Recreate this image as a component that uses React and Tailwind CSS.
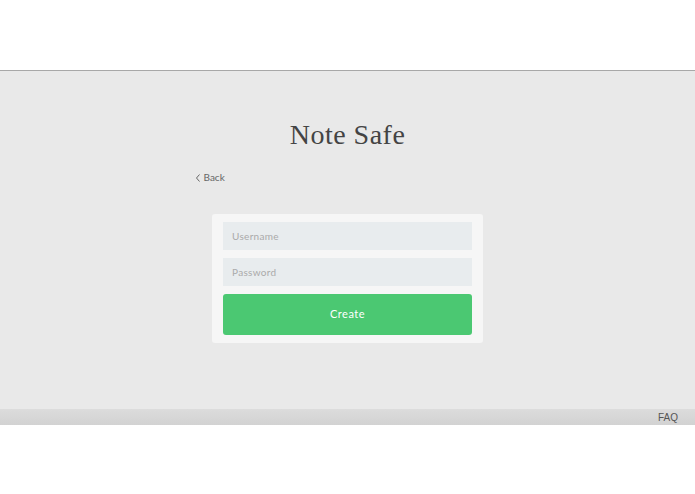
const App = () => {
    return (
        <div className="w-[695px] h-[494px] bg-white flex flex-col" style={{ fontFamily: '"Open Sans", "Liberation Sans", sans-serif' }}>
            <div className="h-[70px]" />
            <div className="h-[339px] bg-[#e9e9e9] border-t border-[#a8a8a8] flex flex-col items-center">
                <h1 className="mt-[48px] text-[28px] leading-[32px] text-[#444] font-['Liberation_Serif',serif] tracking-[0.5px]">Note Safe</h1>
                <div className="w-[306px] mt-[19px] flex items-center gap-[3px] text-[10px] text-[#666] font-['Lato',sans-serif] cursor-pointer">
                    <svg width="6" height="8" viewBox="0 0 6 8" fill="none" stroke="#666" strokeWidth="1">
                        <path d="M4.5 0.5 L1.5 4 L4.5 7.5" />
                    </svg>
                    <span>Back</span>
                </div>
                <form className="mt-[29px] w-[271px] bg-[#f6f6f6] rounded-[3px] px-[11px] pt-[8px] pb-[8px] flex flex-col gap-[8px]">
                    <input
                        type="text"
                        placeholder="Username"
                        className="h-[28px] w-full bg-[#e8ecee] px-[9px] text-[10px] text-[#555] placeholder:text-[#aaa] font-['Lato',sans-serif] tracking-[0.3px] focus:outline-none"
                    />
                    <input
                        type="password"
                        placeholder="Password"
                        className="h-[28px] w-full bg-[#e8ecee] px-[9px] text-[10px] text-[#555] placeholder:text-[#aaa] font-['Lato',sans-serif] tracking-[0.3px] focus:outline-none"
                    />
                    <button
                        type="button"
                        className="h-[41px] w-full bg-[#4bc872] rounded-[3px] text-white text-[11px] font-['Lato',sans-serif] tracking-[0.5px]"
                    >
                        Create
                    </button>
                </form>
            </div>
            <div className="h-[16px] bg-gradient-to-b from-[#dcdcdc] to-[#d2d2d2] flex items-center justify-end pr-[17px]">
                <span className="text-[10px] text-[#555] font-['Liberation_Sans',sans-serif]">FAQ</span>
            </div>
        </div>
    );
};

export default App;
